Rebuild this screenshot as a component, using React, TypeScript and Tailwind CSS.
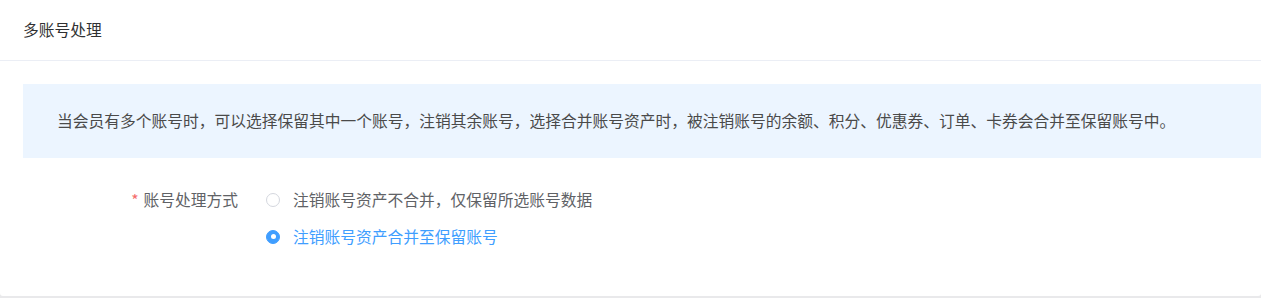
import React from "react";

const font = { fontFamily: '"Noto Sans CJK SC", "Noto Sans", sans-serif' };

function Radio({ checked, label }: { checked?: boolean; label: string }) {
  return (
    <label className="flex items-center h-[37px] cursor-pointer">
      {checked ? (
        <span className="w-[14px] h-[14px] rounded-full bg-[#409eff] border border-[#409eff] flex items-center justify-center">
          <span className="w-[5px] h-[5px] rounded-full bg-white"></span>
        </span>
      ) : (
        <span className="w-[14px] h-[14px] rounded-full bg-white border border-[#d4d7de]"></span>
      )}
      <span className={`ml-[13px] ${checked ? "text-[#409eff]" : "text-[#606266]"}`}>{label}</span>
    </label>
  );
}

export default function App() {
  return (
    <div className="w-full h-[298px] bg-[#e9e9eb] text-[15.75px] leading-none" style={font}>
      <div className="w-full h-[296px] bg-white rounded-b-[3px] flex flex-col">
        <div className="h-[61px] border-b border-[#ebeef5] flex items-center px-[23px] text-[#303133]">
          多账号处理
        </div>
        <div className="pl-[23px] pt-[23px]">
          <div className="h-[74px] bg-[#ecf5ff] flex items-center pl-[34px] text-[#4a4a4a]">
            当会员有多个账号时，可以选择保留其中一个账号，注销其余账号，选择合并账号资产时，被注销账号的余额、积分、优惠券、订单、卡券会合并至保留账号中。
          </div>
          <div className="flex mt-[23px]">
            <div className="w-[215px] h-[37px] flex items-center justify-end text-[#606266]">
              <span className="text-[#f56c6c] mr-[5px]">*</span>
              账号处理方式
            </div>
            <div className="ml-[28px] flex flex-col">
              <Radio label="注销账号资产不合并，仅保留所选账号数据" />
              <Radio checked label="注销账号资产合并至保留账号" />
            </div>
          </div>
        </div>
      </div>
    </div>
  );
}
